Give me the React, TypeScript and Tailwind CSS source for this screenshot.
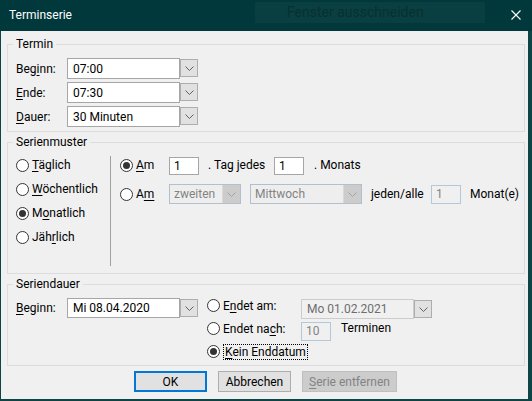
import type { ReactNode } from "react";

function Chevron({ color = "#606060" }: { color?: string }) {
  return (
    <svg width="9" height="5" viewBox="0 0 9 5" fill="none">
      <path d="M0.5 0.5 L4.5 4.5 L8.5 0.5" stroke={color} strokeWidth="1" />
    </svg>
  );
}

function U({ children }: { children: ReactNode }) {
  return <span className="underline underline-offset-[2px]">{children}</span>;
}

function Radio({
  checked = false,
  children,
  width,
  focus = false,
}: {
  checked?: boolean;
  children: ReactNode;
  width?: string;
  focus?: boolean;
}) {
  return (
    <div className={`flex items-center gap-[3px] ${width ?? ""}`}>
      <span className="flex h-[13px] w-[13px] shrink-0 items-center justify-center rounded-full border border-[#333333] bg-white">
        {checked && <span className="h-[7px] w-[7px] rounded-full bg-[#333333]" />}
      </span>
      <span
        className={
          focus
            ? "border border-dotted border-black px-px leading-[14px]"
            : "leading-[16px]"
        }
      >
        {children}
      </span>
    </div>
  );
}

function Combo({
  value,
  height = "h-[21px]",
  textDisabled = false,
}: {
  value: string;
  height?: string;
  textDisabled?: boolean;
}) {
  return (
    <div className="flex items-start">
      <div
        className={`flex w-[113px] items-center border px-[5px] ${height} ${
          textDisabled
            ? "border-[#cccccc] bg-[#f0f0f0] text-[#6d6d6d]"
            : "border-[#a6a6a6] bg-white text-black"
        }`}
      >
        {value}
      </div>
      <div className="mt-px flex h-[18px] w-[18px] items-center justify-center border border-[#adadad] bg-[#e1e1e1]">
        <Chevron />
      </div>
    </div>
  );
}

function DisabledCombo({ value, width }: { value: string; width: string }) {
  return (
    <div
      className={`flex h-[20px] items-stretch border border-[#b3bfcd] bg-[#eeeeee] ${width}`}
    >
      <div className="flex flex-1 items-center px-[4px] text-[#838383]">{value}</div>
      <div className="flex w-[18px] items-center justify-center border-l border-[#d9d9d9] bg-[#cccccc]">
        <Chevron color="#a3a3a3" />
      </div>
    </div>
  );
}

function Field({
  value,
  disabled = false,
  extra = "",
}: {
  value: string;
  disabled?: boolean;
  extra?: string;
}) {
  return (
    <div
      className={`flex w-[30px] items-center border px-[4px] ${extra} ${
        disabled
          ? "h-[19px] border-[#b4c8dc] bg-[#f0f0f0] text-[#838383]"
          : "h-[18px] border-[#a6a6a6] bg-white text-black"
      }`}
    >
      {value}
    </div>
  );
}

function Group({
  title,
  className = "",
  children,
}: {
  title: string;
  className?: string;
  children: ReactNode;
}) {
  return (
    <fieldset className={`ml-[6px] mr-[3px] border border-[#dcdcdc] ${className}`}>
      <legend className="ml-[5px] px-[3px] leading-[16px]">{title}</legend>
      {children}
    </fieldset>
  );
}

export default function App() {
  return (
    <div className="flex h-[401px] w-[532px] flex-col bg-[#0d4547] font-['Roboto',sans-serif] text-[12px] text-black">
      {/* title bar */}
      <div className="flex h-[31px] shrink-0 items-start bg-[#01383b]">
        <span className="ml-[9px] mt-[7px] text-[12px] leading-[16px] text-white">
          Terminserie
        </span>
        <div className="ml-auto mt-[2px] flex h-[21px] w-[230px] items-center bg-[#0a3f41] pl-[32px] text-[14px] text-[#08302f]">
          Fenster ausschneiden
        </div>
        <div className="ml-[26px] mr-[11px] mt-[10px]">
          <svg width="10" height="10" viewBox="0 0 10 10">
            <path d="M0.5 0.5 L9.5 9.5 M9.5 0.5 L0.5 9.5" stroke="#ffffff" strokeWidth="1.1" />
          </svg>
        </div>
      </div>

      <div className="mb-[2px] ml-px mr-[4px] flex flex-1 flex-col bg-[#f0f0f0]">
        {/* Termin */}
        <Group title="Termin" className="mt-[5px]">
          <div className="flex flex-col gap-[3px] pb-[4px] pl-[8px] pt-[6px]">
            <div className="flex items-center">
              <span className="w-[51px]">
                Beg<U>i</U>nn:
              </span>
              <Combo value="07:00" />
            </div>
            <div className="flex items-center">
              <span className="w-[51px]">
                <U>E</U>nde:
              </span>
              <Combo value="07:30" />
            </div>
            <div className="flex items-center">
              <span className="w-[51px]">
                <U>D</U>auer:
              </span>
              <Combo value="30 Minuten" />
            </div>
          </div>
        </Group>

        {/* Serienmuster */}
        <Group title="Serienmuster" className="mt-[2px]">
          <div className="flex h-[123px] pb-[2px] pl-[8px] pt-[3px]">
            <div className="flex w-[94px] flex-col">
              <div className="flex h-[24px] items-center">
                <Radio>
                  <U>T</U>äglich
                </Radio>
              </div>
              <div className="flex h-[24px] items-center">
                <Radio>
                  <U>W</U>öchentlich
                </Radio>
              </div>
              <div className="flex h-[24px] items-center">
                <Radio checked>
                  M<U>o</U>natlich
                </Radio>
              </div>
              <div className="flex h-[24px] items-center">
                <Radio>
                  Jäh<U>r</U>lich
                </Radio>
              </div>
            </div>
            <div className="mb-[5px] mt-[3px] w-px bg-[#a0a0a0]" />
            <div className="flex flex-col pl-[9px]">
              <div className="flex h-[24px] items-center">
                <Radio checked width="w-[49px]">
                  <U>A</U>m
                </Radio>
                <Field value="1" extra="mt-[2px]" />
                <span className="ml-[9px] w-[66px]">. Tag jedes</span>
                <Field value="1" extra="mt-[2px]" />
                <span className="ml-[10px]">. Monats</span>
              </div>
              <div className="mt-[5px] flex h-[24px] items-center">
                <Radio width="w-[49px]">
                  A<U>m</U>
                </Radio>
                <DisabledCombo value="zweiten" width="w-[72px]" />
                <div className="ml-[9px]">
                  <DisabledCombo value="Mittwoch" width="w-[112px]" />
                </div>
                <span className="ml-[9px] w-[60px]">jeden/alle</span>
                <Field value="1" disabled />
                <span className="ml-[9px]">Monat(e)</span>
              </div>
            </div>
          </div>
        </Group>

        {/* Seriendauer */}
        <Group title="Seriendauer" className="mt-[2px]">
          <div className="flex items-start pb-[2px] pl-[8px] pt-[2px]">
            <div className="mt-[4px] flex h-[20px] items-center">
              <span className="w-[51px]">
                <U>B</U>eginn:
              </span>
              <Combo value="Mi 08.04.2020" height="h-[20px]" />
            </div>
            <div className="ml-[9px] flex flex-col">
              <div className="flex h-[23px] items-start">
                <div className="flex h-[23px] items-center">
                  <Radio width="w-[94px]">
                    E<U>n</U>det am:
                  </Radio>
                </div>
                <div className="mt-[5px]">
                  <Combo value="Mo 01.02.2021" height="h-[20px]" textDisabled />
                </div>
              </div>
              <div className="flex h-[23px] items-start">
                <div className="flex h-[23px] items-center">
                  <Radio width="w-[94px]">
                    Endet na<U>c</U>h:
                  </Radio>
                </div>
                <Field value="10" disabled extra="mt-[5px] items-end" />
                <span className="ml-[10px] mt-[3px] leading-[16px]">Terminen</span>
              </div>
              <div className="flex h-[23px] items-center">
                <Radio checked focus>
                  <U>K</U>ein Enddatum
                </Radio>
              </div>
            </div>
          </div>
        </Group>

        {/* buttons */}
        <div className="mt-[5px] flex gap-[11px] pl-[133px]">
          <button
            type="button"
            className="h-[21px] w-[73px] border-2 border-[#0078d7] bg-[#e1e1e1] leading-none"
          >
            OK
          </button>
          <button
            type="button"
            className="h-[21px] w-[73px] border border-[#adadad] bg-[#e1e1e1] leading-none"
          >
            Abbrechen
          </button>
          <button
            type="button"
            className="h-[21px] w-[95px] border border-[#bfbfbf] bg-[#cccccc] leading-none text-[#838383]"
          >
            <U>S</U>erie entfernen
          </button>
        </div>
      </div>
    </div>
  );
}
